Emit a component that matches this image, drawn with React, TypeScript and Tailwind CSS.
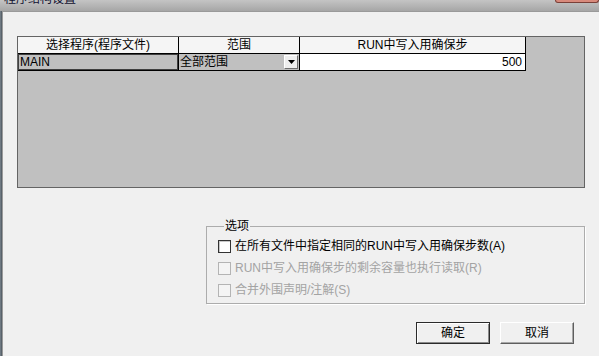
import React from 'react';

const font = "font-['Liberation_Sans','Noto_Sans_CJK_SC',sans-serif]";

type OptionProps = { label: React.ReactNode; disabled?: boolean };

const OptionRow: React.FC<OptionProps> = ({ label, disabled }) => (
  <div className="h-[22px] flex items-center">
    <span
      className={
        disabled
          ? 'w-[13px] h-[13px] border border-[#b4b4b4] bg-[#f4f4f4]'
          : 'w-[13px] h-[13px] border border-[#333333] bg-white shadow-[inset_1px_1px_0_#c8c8c8]'
      }
    />
    <span className={`ml-[4px] leading-[14px] whitespace-nowrap ${disabled ? 'text-[#a3a3a3]' : 'text-black'}`}>
      {label}
    </span>
  </div>
);

const DialogButton: React.FC<{ text: string; primary?: boolean }> = ({ text, primary }) => (
  <button
    className={
      primary
        ? 'w-[74px] h-[22px] bg-[#f0f0f0] border border-[#2b2b2b] shadow-[inset_1px_1px_0_#ffffff,inset_-1px_-1px_0_#8a8a8a] leading-[14px] text-black'
        : 'w-[74px] h-[22px] bg-[#f0f0f0] border border-t-white border-l-white border-r-[#5e5e5e] border-b-[#5e5e5e] shadow-[inset_-1px_-1px_0_#a8a8a8] leading-[14px] text-black'
    }
  >
    {text}
  </button>
);

const App: React.FC = () => {
  return (
    <div className={`w-[599px] h-[356px] overflow-hidden bg-[#f0f0f0] flex flex-col text-[12px] ${font}`}>
      {/* title bar, mostly scrolled off the top */}
      <div className="h-[11px] flex bg-gradient-to-b from-[#c4c4c4] to-[#a6a6a6] overflow-hidden shrink-0">
        <span className="pl-[4px] -mt-[8px] leading-[14px] text-[#101030]">程序结构设置</span>
        <div className="ml-auto w-[44px] h-[3px] bg-[#d88a7c] border border-t-0 border-[#7a4038] rounded-b-[3px]" />
      </div>

      <div className="flex flex-1">
        <div className="w-[2px] bg-gradient-to-r from-[#7b868f] to-[#4d565e]" />
        <div className="flex-1 border-l border-t border-[#9a9a9a] pl-[14px] pt-[24px]">
          {/* program list grid */}
          <div className="w-[568px] h-[152px] bg-[#c0c0c0] border border-[#646464]">
            <div className="flex">
              <div className="w-[161px] h-[17px] bg-[#f5f5f5] border-r border-b border-black text-center leading-[16px]">
                选择程序(程序文件)
              </div>
              <div className="w-[121px] h-[17px] bg-[#f5f5f5] border-r border-b border-black text-center leading-[16px]">
                范围
              </div>
              <div className="w-[226px] h-[17px] bg-[#f5f5f5] border-r border-b border-black text-center leading-[16px]">
                RUN中写入用确保步
              </div>
            </div>
            <div className="flex">
              <div className="w-[161px] h-[17px] border-r border-b border-black">
                <div className="h-full bg-[#c0c0c0] shadow-[inset_1px_1px_0_#404040,inset_-1px_-1px_0_#404040] pl-[2px] leading-[16px] text-black">
                  MAIN
                </div>
              </div>
              <div className="w-[121px] h-[17px] border-r border-b border-black flex items-center">
                <span className="pl-[1px] leading-[16px] text-black">全部范围</span>
                <div className="ml-auto mr-[1px] w-[14px] h-[14px] bg-[#eeeeee] border border-t-white border-l-white border-r-[#6e6e6e] border-b-[#6e6e6e] flex items-center justify-center">
                  <svg width="7" height="4" viewBox="0 0 7 4">
                    <path d="M0 0h7L3.5 4z" fill="#000" />
                  </svg>
                </div>
              </div>
              <div className="w-[226px] h-[17px] bg-white border-r border-b border-black text-right pr-[3px] leading-[16px] text-black">
                500
              </div>
            </div>
          </div>

          {/* options group */}
          <fieldset className="ml-[189px] mt-[31px] w-[379px] border border-[#acacac] shadow-[1px_1px_0_#ffffff] pl-[11px] pt-[2px] pb-[2px]">
            <legend className="ml-[6px] px-[1px] leading-[14px] text-black">选项</legend>
            <OptionRow label="在所有文件中指定相同的RUN中写入用确保步数(A)" />
            <OptionRow label="RUN中写入用确保步的剩余容量也执行读取(R)" disabled />
            <OptionRow label="合并外围声明/注解(S)" disabled />
          </fieldset>

          <div className="ml-[399px] mt-[18px] flex gap-[10px]">
            <DialogButton text="确定" primary />
            <DialogButton text="取消" />
          </div>
        </div>
      </div>
    </div>
  );
};

export default App;
